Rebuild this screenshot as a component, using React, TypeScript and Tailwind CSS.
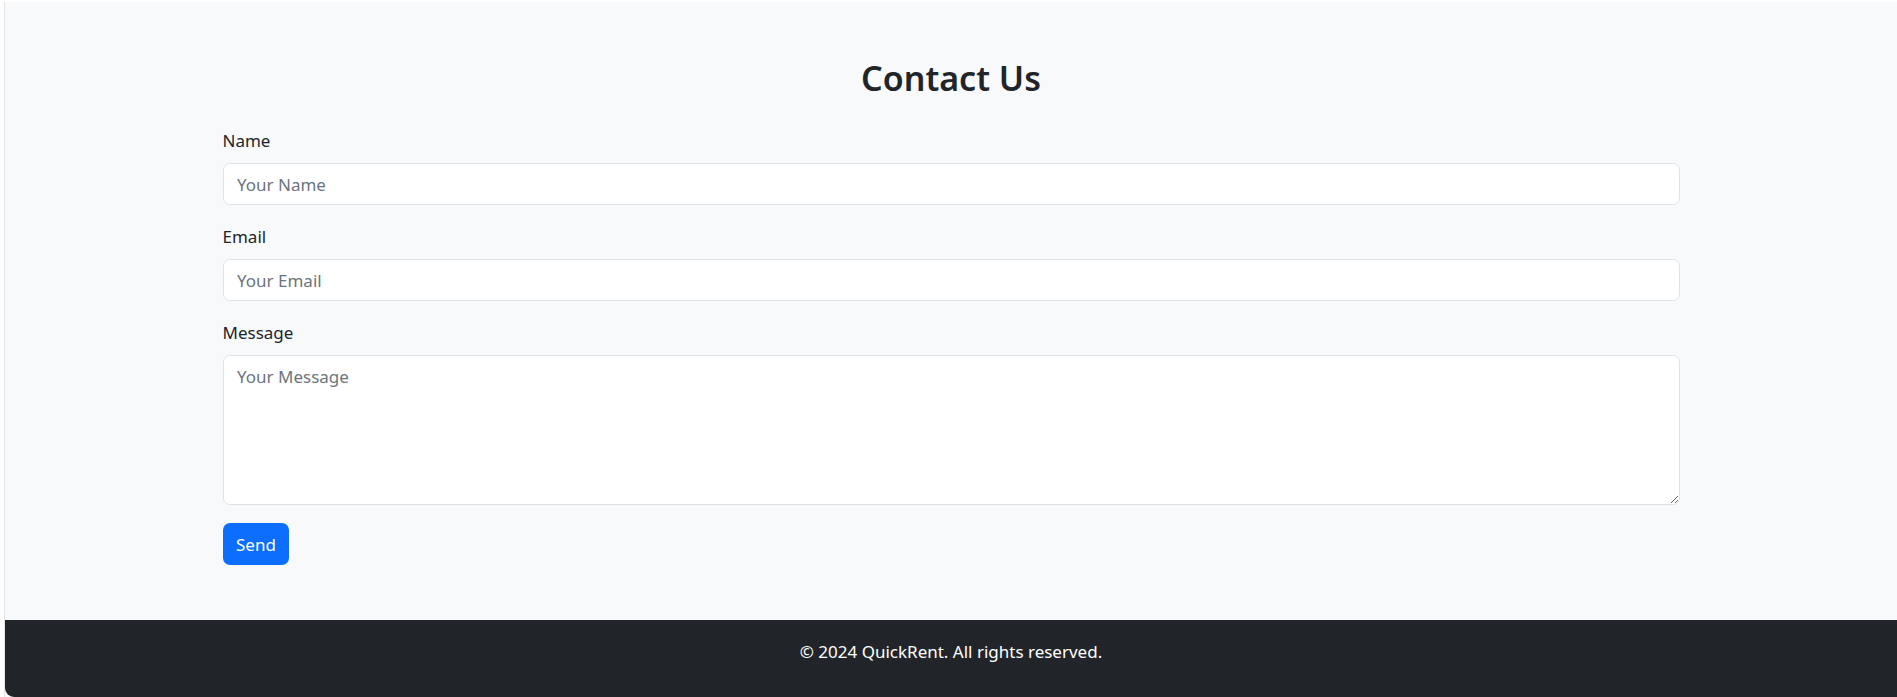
import React from 'react';

const fieldClass =
  'block w-full rounded-[7px] border border-[#dee2e6] bg-white px-[13.5px] py-[6.75px] text-[17px] leading-[27px] text-[#212529] placeholder:text-[#6c757d] outline-none';

const labelClass = 'mb-[9px] block text-[17px] leading-[27px] text-[#212529]';

export default function App() {
  return (
    <div
      className="flex min-h-[697px] flex-col bg-white pl-[4px] pt-[2px]"
      style={{ fontFamily: '"Noto Sans", "Open Sans", sans-serif' }}
    >
      <div className="flex flex-1 flex-col border-l border-[#e3e3e3] bg-[#f8f9fa]">
        <main className="mx-auto w-[1457px] pb-[55px] pt-[55px]">
          <h2 className="mb-[27px] text-center text-[34px] font-semibold leading-[43px] text-[#212529]">
            Contact Us
          </h2>
          <form onSubmit={(e) => e.preventDefault()}>
            <div className="mb-[18px]">
              <label className={labelClass}>Name</label>
              <input type="text" placeholder="Your Name" className={`${fieldClass} h-[42px]`} />
            </div>
            <div className="mb-[18px]">
              <label className={labelClass}>Email</label>
              <input type="email" placeholder="Your Email" className={`${fieldClass} h-[42px]`} />
            </div>
            <div className="mb-[18px]">
              <label className={labelClass}>Message</label>
              <textarea placeholder="Your Message" className={`${fieldClass} h-[150px] resize-y`} />
            </div>
            <button
              type="submit"
              className="h-[42px] rounded-[7px] bg-[#0d6efd] px-[13.5px] text-[17px] leading-[27px] text-white"
            >
              Send
            </button>
          </form>
        </main>
        <footer className="flex-1 rounded-bl-[9px] bg-[#212529] pt-[18px] text-center text-[17px] leading-[27px] text-white">
          <p>© 2024 QuickRent. All rights reserved.</p>
        </footer>
      </div>
    </div>
  );
}
